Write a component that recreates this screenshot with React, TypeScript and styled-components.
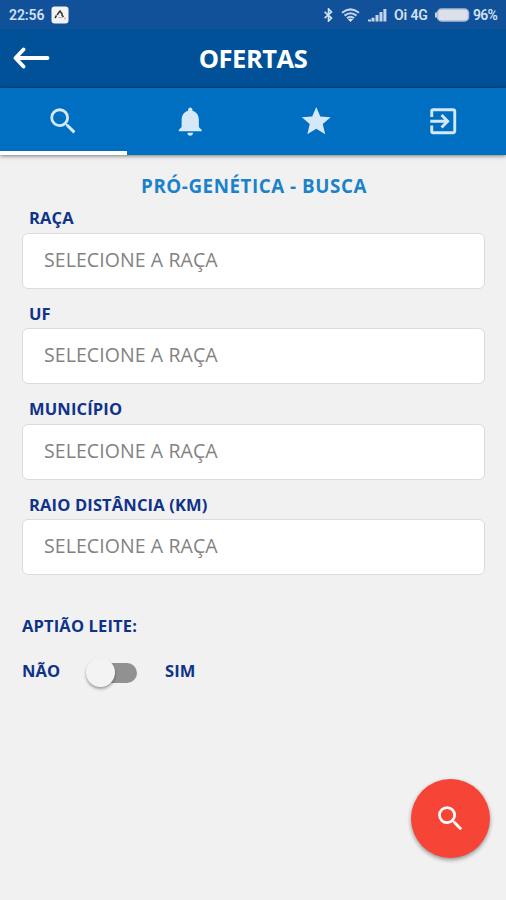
import React from 'react';
import styled, { createGlobalStyle } from 'styled-components';
import { MdSearch, MdNotifications, MdStar, MdExitToApp } from 'react-icons/md';

const GlobalStyle = createGlobalStyle`
  * { box-sizing: border-box; }
  body { margin: 0; background: #f1f1f1; font-family: 'Open Sans', 'Noto Sans', sans-serif; }
`;

const Screen = styled.div`
  width: 506px;
  height: 900px;
  overflow: hidden;
  display: flex;
  flex-direction: column;
  background: #f1f1f1;
`;

const StatusBar = styled.div`
  height: 29px;
  flex: none;
  display: flex;
  align-items: center;
  justify-content: space-between;
  padding: 1px 8px 0 9px;
  background: #11519a;
  color: #d3e1f2;
  font: 600 14px/28px Roboto, sans-serif;
`;

const StatusGroup = styled.div`
  display: flex;
  align-items: center;
`;

const StatusText = styled.span<{ $width: number; $size?: number; $gap?: number; $spacing?: number }>`
  width: ${p => p.$width}px;
  margin-left: ${p => p.$gap ?? 0}px;
  font-size: ${p => p.$size ?? 14}px;
  letter-spacing: ${p => p.$spacing ?? 0}px;
  white-space: nowrap;
`;

const Glyph = styled.svg<{ $gap?: number }>`
  display: block;
  flex: none;
  margin-left: ${p => p.$gap ?? 0}px;
`;

const TitleBar = styled.header`
  height: 59px;
  flex: none;
  display: grid;
  grid-template-columns: 64px 1fr 64px;
  align-items: center;
  background: linear-gradient(#015198 55px, #024b8d 59px);
`;

const BackButton = styled.button`
  display: flex;
  border: 0;
  padding: 0 0 1px 13px;
  background: none;
`;

const Title = styled.h1`
  margin: 0 0 1px;
  text-align: center;
  color: #fff;
  font-size: 25.5px;
  line-height: 34px;
  font-weight: 700;
  letter-spacing: -0.45px;
`;

const Tabs = styled.nav`
  height: 67px;
  flex: none;
  display: grid;
  grid-template-columns: repeat(4, 1fr);
  background: #006fc1;
  box-shadow: 0 1px 4px rgba(0, 0, 0, 0.5);
`;

const Tab = styled.button<{ $active?: boolean }>`
  display: flex;
  justify-content: center;
  align-items: center;
  padding: 3px 0 0;
  border: 0;
  border-bottom: 4px solid ${p => (p.$active ? '#fff' : 'transparent')};
  background: none;
  color: #d4e8f8;
  font-size: 34.5px;
`;

const Content = styled.main`
  flex: 1;
  padding: 17px 21px 0 22px;
  color: #0f3389;
`;

const Heading = styled.h2`
  margin: 0;
  padding-left: 1px;
  text-align: center;
  color: #1a82ca;
  font-size: 18.8px;
  line-height: 28px;
  font-weight: 700;
  letter-spacing: 0.54px;
`;

const Field = styled.label`
  display: block;
  height: 95.6px;
  padding-top: 5px;
`;

const Label = styled.span<{ $inset?: boolean }>`
  display: block;
  padding-left: ${p => (p.$inset ? 7 : 0)}px;
  font-size: 16.5px;
  line-height: 26px;
  font-weight: 700;
  letter-spacing: 0.15px;
  white-space: nowrap;
`;

const Select = styled.div`
  height: 56px;
  margin-top: 1.7px;
  border: 1.5px solid #dcdcdc;
  border-radius: 6px;
  background: #fff;
  padding: 0 21px;
  color: #828282;
  font-size: 19.5px;
  line-height: 51px;
  font-weight: 400;
  letter-spacing: 0.08px;
`;

const Aptitude = styled.section`
  padding-top: 31px;
`;

const SwitchRow = styled.div`
  display: flex;
  align-items: center;
  height: 30px;
  margin-top: 17px;
`;

const SwitchSide = styled.div<{ $width: number }>`
  width: ${p => p.$width}px;
`;

const Track = styled.div`
  width: 45px;
  height: 20px;
  margin: 3px 28px 0 5px;
  border-radius: 10px;
  background: #919191;
  display: flex;
  align-items: center;
`;

const Knob = styled.div`
  width: 29px;
  height: 29px;
  flex: none;
  margin-left: -6px;
  border-radius: 50%;
  background: #f3f3f3;
  box-shadow: 0 2px 3px rgba(0, 0, 0, 0.35);
`;

const SearchFab = styled.button`
  position: absolute;
  left: 411px;
  top: 779px;
  width: 79px;
  height: 79px;
  display: flex;
  align-items: center;
  justify-content: center;
  padding: 0;
  border: 0;
  border-radius: 50%;
  background: #f64436;
  color: #fff;
  font-size: 33px;
  box-shadow: 0 2px 4px rgba(0, 0, 0, 0.4);
`;

const fields = ['RAÇA', 'UF', 'MUNICÍPIO', 'RAIO DISTÂNCIA (KM)'];

export default function App() {
  return (
    <Screen>
      <GlobalStyle />
      <StatusBar>
        <StatusGroup>
          <StatusText $width={36} $spacing={-0.1}>22:56</StatusText>
          <Glyph $gap={6} width="18" height="18" viewBox="0 0 18 18">
            <rect x="0.5" y="0.5" width="17" height="17" rx="3" fill="#f3f3f3" />
            <path d="M4 12l1.5-2.5M6 9l3-4 2.5 3.5M10.5 8.5l2 2.5" fill="none" stroke="#343434" strokeWidth="1.5" />
            <path d="M7.5 11.5h4" stroke="#aaa" />
            <circle cx="14" cy="12.5" r="1.1" fill="#e9b8a4" />
          </Glyph>
        </StatusGroup>
        <StatusGroup>
          <Glyph width="11" height="14" viewBox="0 0 11 16">
            <path d="M1 4.5l8 7L5.5 15V1L9 4.5l-8 7" fill="none" stroke="#d3e1f2" strokeWidth="1.8" />
          </Glyph>
          <Glyph $gap={7} width="19" height="14" viewBox="0 0 19 14">
            <path d="M1 4.8Q9.5-2 18 4.8M3.5 7.6q6-4.8 12 0M6 10.1q3.5-2.6 7 0" fill="none" stroke="#c4d6ec" strokeWidth="2" />
            <path d="M6.8 11.3q2.7-1.5 5.4 0L9.5 14z" fill="#d3e1f2" />
          </Glyph>
          <Glyph $gap={8} width="19" height="14" viewBox="0 0 19 14">
            <path d="M0 13.5v-2h3v2zM3.5 13.5V9.8h3v3.7zM7.5 13.5V7h3v6.5zM11.5 13.5V4h3v9.5zM15.4 13.5V1h3v12.5z" fill="#c4d6ec" />
          </Glyph>
          <StatusText $width={35} $gap={7} $spacing={-0.1}>Oi 4G</StatusText>
          <Glyph $gap={6} width="35" height="14" viewBox="0 0 35 14">
            <rect x="2.5" y="1" width="31" height="12" rx="4" fill="#dce1e9" stroke="#a9bad5" strokeWidth="1.5" />
            <path d="M1 4.5v5" stroke="#c5d3e7" strokeWidth="2" />
          </Glyph>
          <StatusText $width={25} $gap={3} $size={14} $spacing={-0.7}>96%</StatusText>
        </StatusGroup>
      </StatusBar>
      <TitleBar>
        <BackButton aria-label="Voltar">
          <Glyph width="37" height="22" viewBox="0 0 37 22">
            <path d="M10.5 2.5L2.5 11l8 8.5M3 11h31.5" fill="none" stroke="#fff" strokeWidth="3.8" strokeLinecap="round" strokeLinejoin="round" />
          </Glyph>
        </BackButton>
        <Title>OFERTAS</Title>
      </TitleBar>
      <Tabs>
        <Tab $active aria-label="Busca"><MdSearch /></Tab>
        <Tab aria-label="Notificações"><MdNotifications /></Tab>
        <Tab aria-label="Favoritos"><MdStar /></Tab>
        <Tab aria-label="Sair"><MdExitToApp /></Tab>
      </Tabs>
      <Content>
        <Heading>PRÓ-GENÉTICA - BUSCA</Heading>
        {fields.map(name => (
          <Field key={name}>
            <Label $inset>{name}</Label>
            <Select>SELECIONE A RAÇA</Select>
          </Field>
        ))}
        <Aptitude>
          <Label>APTIÃO LEITE:</Label>
          <SwitchRow>
            <SwitchSide $width={65}><Label>NÃO</Label></SwitchSide>
            <Track role="switch" aria-checked="false"><Knob /></Track>
            <Label>SIM</Label>
          </SwitchRow>
        </Aptitude>
      </Content>
      <SearchFab aria-label="Buscar"><MdSearch /></SearchFab>
    </Screen>
  );
}
